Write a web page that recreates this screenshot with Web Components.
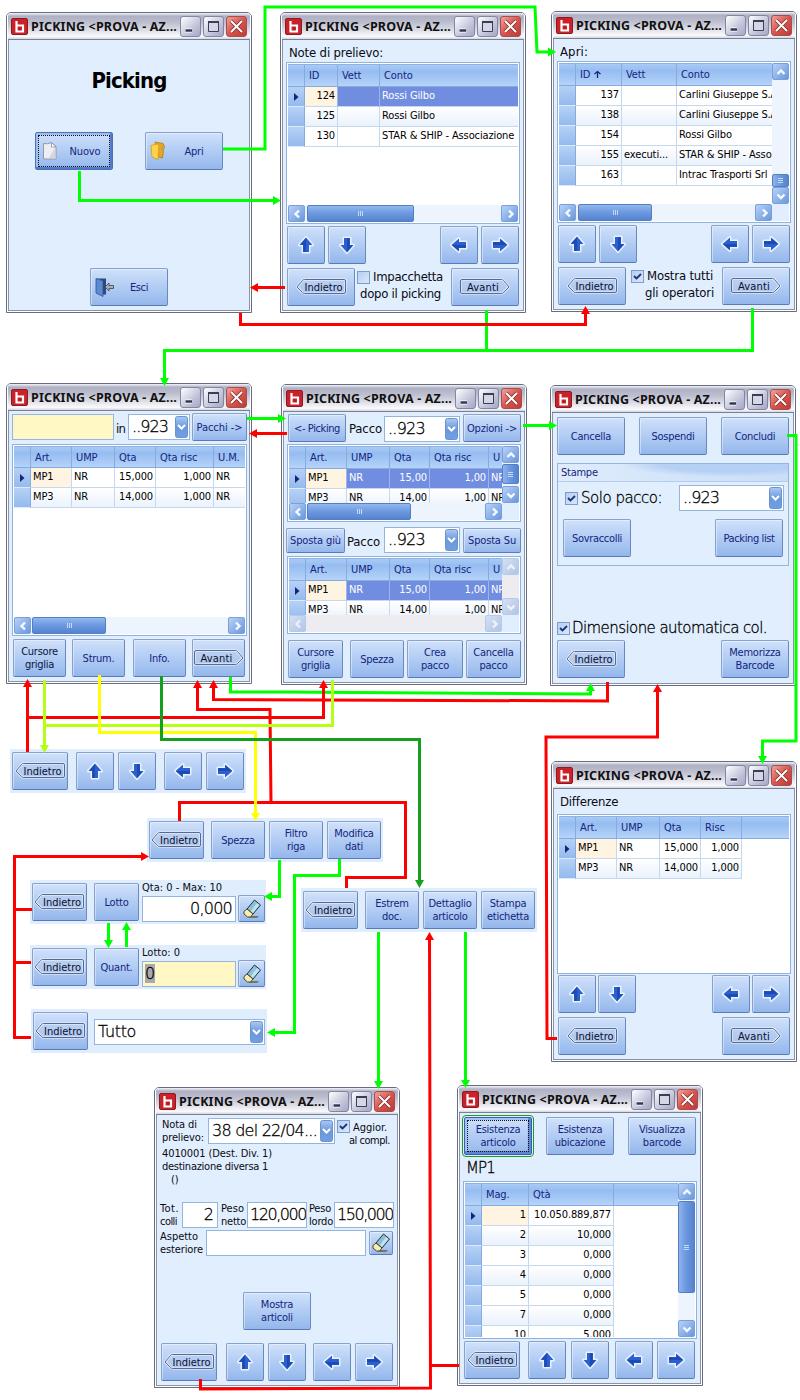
<!DOCTYPE html>
<html lang="it">
<head>
<meta charset="utf-8">
<title>Picking</title>
<style>
html,body{margin:0;padding:0;background:#fff}
body{width:800px;height:1400px;overflow:hidden;font:11px/13px "DejaVu Sans Condensed","DejaVu Sans",sans-serif;font-stretch:condensed;color:#0a0a14}
.r{display:flex;align-items:flex-start}
.c{align-items:center}
.sb{justify-content:space-between}
.m{font-size:13px;line-height:17px}
.l{font-family:"DejaVu Sans Light","DejaVu Sans",sans-serif;font-weight:200;font-stretch:normal;font-size:15px;line-height:18px;color:#000;-webkit-text-stroke:.3px #000}
.ctr{text-align:center}
</style>
</head>
<body>
<flow-canvas>
  <pick-window x="6" y="12">
    <div class="ctr" style="font-size:22px;font-weight:bold;line-height:26px;padding-top:28px;color:#000"><fit-text w="75">Picking</fit-text></div>
    <div class="r sb" style="padding:38px 26px 0"><icon-button kind="new" focus><fit-text w="31">Nuovo</fit-text></icon-button><icon-button kind="open"><fit-text w="19">Apri</fit-text></icon-button></div>
    <div class="r" style="padding:98px 0 0 81px"><icon-button kind="exit"><fit-text w="18">Esci</fit-text></icon-button></div>
  </pick-window>

  <pick-window x="280" y="12">
    <div class="m" style="padding:4px 0 1px 6px"><fit-text w="94">Note di prelievo:</fit-text></div>
    <data-grid style="margin-left:3px" w="234" h="162" cols="ID:33:r|Vett:42|Conto:150" rows="124;;Rossi Gilbo|125;;Rossi Gilbo|130;;STAR &amp; SHIP - Associazione" hl="select" hs="2,107"></data-grid>
    <div class="r sb" style="padding:2px 4px 0 4px"><div class="r" style="gap:3px"><arrow-button dir="up"></arrow-button><arrow-button dir="down"></arrow-button></div><div class="r" style="gap:3px"><arrow-button dir="left"></arrow-button><arrow-button dir="right"></arrow-button></div></div>
    <div class="r" style="padding:4px 4px 0 4px"><nav-button w="68" kind="back"></nav-button>
      <div class="m" style="width:96px;padding-left:2px"><div class="r"><check-box style="margin-top:3px"></check-box><fit-text style="margin-left:3px" w="70">Impacchetta</fit-text></div><div style="padding-left:3px"><fit-text w="81">dopo il picking</fit-text></div></div>
      <nav-button style="margin-left:-2px" w="68" kind="next"></nav-button></div>
  </pick-window>

  <pick-window x="551" y="11">
    <div class="m" style="padding:4px 0 1px 6px"><fit-text w="28">Apri:</fit-text></div>
    <data-grid style="margin-left:3px" w="234" h="162" cols="ID:46:r:sort|Vett:55|Conto:140" rows="137;;Carlini Giuseppe S.A|138;;Carlini Giuseppe S.A|154;;Rossi Gilbo|155;executi...;STAR &amp; SHIP - Asso|163;;Intrac Trasporti Srl" hl="none" hs="2,74" vs="94,13"></data-grid>
    <div class="r sb" style="padding:2px 4px 0 4px"><div class="r" style="gap:3px"><arrow-button dir="up"></arrow-button><arrow-button dir="down"></arrow-button></div><div class="r" style="gap:3px"><arrow-button dir="left"></arrow-button><arrow-button dir="right"></arrow-button></div></div>
    <div class="r" style="padding:4px 4px 0 4px"><nav-button w="68" kind="back"></nav-button>
      <div class="m" style="width:91px;padding-left:5px"><div class="r"><check-box checked style="margin-top:3px"></check-box><fit-text style="margin-left:3px" w="66">Mostra tutti</fit-text></div><div style="padding-left:14px"><fit-text w="69">gli operatori</fit-text></div></div>
      <nav-button w="68" kind="next"></nav-button></div>
  </pick-window>

  <pick-window x="6" y="383">
    <div class="r" style="padding:3px 0 0 3px"><text-field yellow w="102" h="26"></text-field><span class="m" style="padding:6px 2px 0 2px"><fit-text w="9">in</fit-text></span><drop-down w="62" style="margin-left:1px"><fit-text w="36">..923</fit-text></drop-down><pick-button style="margin:-1px 0 0 2px" w="55" h="28"><fit-text w="46">Pacchi -&gt;</fit-text></pick-button></div>
    <data-grid style="margin:3px 0 0 3px" w="235" h="192" hh="22" cols="Art.:41|UMP:43|Qta:41:r|Qta risc:58:r|U.M.:40" rows="MP1;NR;15,000;1,000;NR|MP3;NR;14,000;1,000;NR" hl="focus" hs="1,74"></data-grid>
    <div class="r" style="padding:3px 0 0 4px"><pick-button w="53" h="38" dark>Cursore<br>griglia</pick-button><pick-button style="margin-left:6px" w="53" h="38">Strum.</pick-button><pick-button style="margin-left:8px" w="53" h="38">Info.</pick-button><nav-button style="margin-left:6px" w="53" kind="next"></nav-button></div>
  </pick-window>

  <pick-window x="281" y="384">
    <div class="r" style="padding:2px 0 0 4px"><pick-button w="58" h="28"><fit-text w="46">&lt;- Picking</fit-text></pick-button><span class="m" style="padding:6px 0 0 3px;width:35px"><fit-text w="33">Pacco</fit-text></span><drop-down w="76" style="margin-top:2px"><fit-text w="37">..923</fit-text></drop-down><pick-button style="margin-left:3px" w="58" h="28"><fit-text w="50">Opzioni -&gt;</fit-text></pick-button></div>
    <data-grid style="margin:2px 0 0 3px" w="234" h="78" cols="Art.:41|UMP:43|Qta:40:r|Qta risc:59:r|U:40" rows="MP1;NR;15,00;1,00;NR|MP3;NR;14,00;1,00;NR" hl="select" hs="1,104" vs="1,20"></data-grid>
    <div class="r" style="padding:5px 0 0 2px"><pick-button style="margin-top:1px" w="59" h="25"><fit-text w="51">Sposta giù</fit-text></pick-button><span class="m" style="padding:6px 0 0 2px;width:37px"><fit-text w="33">Pacco</fit-text></span><drop-down w="76"><fit-text w="37">..923</fit-text></drop-down><pick-button style="margin:1px 0 0 3px" w="58" h="25"><fit-text w="48">Sposta Su</fit-text></pick-button></div>
    <data-grid style="margin:3px 0 0 3px" w="234" h="78" cols="Art.:41|UMP:43|Qta:40:r|Qta risc:59:r|U:40" rows="MP1;NR;15,00;1,00;NR|MP3;NR;14,00;1,00;NR" hl="select" hs="0,0" vs="0,0" off></data-grid>
    <div class="r" style="padding:6px 0 0 4px"><pick-button w="55" h="38">Cursore<br>griglia</pick-button><pick-button style="margin-left:7px" w="54" h="38">Spezza</pick-button><pick-button style="margin-left:3px" w="56" h="38">Crea<br>pacco</pick-button><pick-button style="margin-left:3px" w="55" h="38">Cancella<br>pacco</pick-button></div>
  </pick-window>

  <pick-window x="550" y="385">
    <div class="r sb" style="padding:4px 4px 0 4px"><pick-button w="68" h="38">Cancella</pick-button><pick-button w="68" h="38">Sospendi</pick-button><pick-button w="68" h="38">Concludi</pick-button></div>
    <group-box label="Stampe">
      <div class="r c l" style="padding:3px 4px 0 7px"><check-box checked></check-box><fit-text style="margin-left:3px" w="81">Solo pacco:</fit-text><drop-down style="margin-left:auto" w="105"><fit-text w="36">..923</fit-text></drop-down></div>
      <div class="r sb" style="padding:8px 5px 0 5px"><pick-button w="68" h="38"><fit-text w="50">Sovraccolli</fit-text></pick-button><pick-button w="68" h="38"><fit-text w="51">Packing list</fit-text></pick-button></div>
    </group-box>
    <div class="r c l" style="padding:53px 0 0 4px"><check-box checked></check-box><fit-text style="margin-left:2px" w="195">Dimensione automatica col.</fit-text></div>
    <div class="r sb" style="padding:3px 4px 0 4px"><nav-button w="68" kind="back"></nav-button><pick-button w="68" h="38">Memorizza<br>Barcode</pick-button></div>
  </pick-window>

  <pick-window x="551" y="761">
    <div class="m" style="padding:4px 0 4px 6px"><fit-text w="58">Differenze</fit-text></div>
    <data-grid style="margin-left:3px" w="234" h="160" cols="Art.:41|UMP:43|Qta:41:r|Risc:41:r|:60:x" rows="MP1;NR;15,000;1,000|MP3;NR;14,000;1,000" hl="focus"></data-grid>
    <div class="r sb" style="padding:1px 4px 0 4px"><div class="r" style="gap:2px"><arrow-button dir="up"></arrow-button><arrow-button dir="down"></arrow-button></div><div class="r" style="gap:2px"><arrow-button dir="left"></arrow-button><arrow-button dir="right"></arrow-button></div></div>
    <div class="r sb" style="padding:4px 4px 0 4px"><nav-button w="68" kind="back"></nav-button><nav-button w="68" kind="next"></nav-button></div>
  </pick-window>

  <pick-window x="154" y="1087">
    <div class="r" style="padding:3px 0 0 5px;height:29px"><div style="width:46px"><fit-text w="35">Nota di</fit-text><br><fit-text w="42">prelievo:</fit-text></div><drop-down w="127"><fit-text w="105">38 del 22/04...</fit-text></drop-down><div style="padding-left:2px"><div class="r"><check-box checked style="margin-top:2px"></check-box><span style="padding:3px 0 0 3px"><fit-text w="34">Aggior.</fit-text></span></div><div style="padding-left:12px"><fit-text w="41">al compl.</fit-text></div></div></div>
    <div style="padding:0 0 0 5px"><fit-text w="110">4010001 (Dest. Div. 1)</fit-text><br><fit-text w="106">destinazione diversa 1</fit-text><br><span style="padding-left:9px">()</span></div>
    <div class="r" style="padding:16px 0 0 3px"><div style="width:22px"><fit-text w="19">Tot.</fit-text><br><fit-text w="17">colli</fit-text></div><text-field w="36" h="26" right>2</text-field><div style="width:26px;padding-left:3px"><fit-text w="23">Peso</fit-text><br><fit-text w="25">netto</fit-text></div><text-field w="60" h="26"><fit-text w="56">120,000</fit-text></text-field><div style="width:25px;padding-left:2px"><fit-text w="22">Peso</fit-text><br><fit-text w="24">lordo</fit-text></div><text-field w="60" h="26"><fit-text w="56">150,000</fit-text></text-field></div>
    <div class="r" style="padding:2px 0 0 3px"><div style="width:46px"><fit-text w="38">Aspetto</fit-text><br><fit-text w="43">esteriore</fit-text></div><text-field w="160" h="26"></text-field><erase-button w="24" h="24" style="margin:1px 0 0 3px"></erase-button></div>
    <div class="r" style="padding:36px 0 0 86px"><pick-button w="68" h="38">Mostra<br>articoli</pick-button></div>
    <div class="r" style="padding:13px 0 0 4px"><nav-button w="56" kind="back"></nav-button><arrow-button style="margin-left:9px" dir="up"></arrow-button><arrow-button style="margin-left:4px" dir="down"></arrow-button><arrow-button style="margin-left:7px" dir="left"></arrow-button><arrow-button style="margin-left:4px" dir="right"></arrow-button></div>
  </pick-window>

  <pick-window x="457" y="1085">
    <div class="r sb" style="padding:4px 4px 0 4px"><pick-button focus green w="68" h="38">Esistenza<br>articolo</pick-button><pick-button w="68" h="38">Esistenza<br>ubicazione</pick-button><pick-button w="68" h="38">Visualizza<br>barcode</pick-button></div>
    <div class="l" style="padding:4px 0 0 6px"><fit-text w="29">MP1</fit-text></div>
    <data-grid style="margin:4px 0 0 3px" w="234" h="158" cols="Mag.:47:r|Qtà:85:r|:66:x" rows="1;10.050.889,877|2;10,000|3;0,000|4;0,000|5;0,000|7;0,000|10;5.000" hl="focus" vs="1,92"></data-grid>
    <div class="r" style="padding:2px 0 0 4px"><nav-button w="56" kind="back"></nav-button><arrow-button style="margin-left:8px" dir="up"></arrow-button><arrow-button style="margin-left:5px" dir="down"></arrow-button><arrow-button style="margin-left:6px" dir="left"></arrow-button><arrow-button style="margin-left:4px" dir="right"></arrow-button></div>
  </pick-window>

  <button-strip x="10" y="749"><nav-button w="56" kind="back"></nav-button><arrow-button style="margin-left:8px" dir="up"></arrow-button><arrow-button style="margin-left:4px" dir="down"></arrow-button><arrow-button style="margin-left:8px" dir="left"></arrow-button><arrow-button style="margin-left:4px" dir="right"></arrow-button></button-strip>
  <button-strip x="147" y="818"><nav-button w="55" kind="back"></nav-button><pick-button style="margin-left:7px" w="54" h="38">Spezza</pick-button><pick-button style="margin-left:4px" w="54" h="38">Filtro<br>riga</pick-button><pick-button style="margin-left:4px" w="54" h="38">Modifica<br>dati</pick-button></button-strip>
  <button-strip x="30" y="880"><nav-button w="55" kind="back"></nav-button><pick-button style="margin-left:7px" w="45" h="38">Lotto</pick-button><div style="padding-left:3px;margin-top:-2px"><fit-text w="80">Qta: 0 - Max: 10</fit-text><text-field style="margin-top:2px" w="94" h="26" right><fit-text w="42">0,000</fit-text></text-field></div><erase-button style="margin:12px 0 0 2px" w="27" h="27"></erase-button></button-strip>
  <button-strip x="30" y="945"><nav-button w="55" kind="back"></nav-button><pick-button style="margin-left:7px" w="45" h="38">Quant.</pick-button><div style="padding-left:3px;margin-top:-2px"><fit-text w="38">Lotto: 0</fit-text><text-field style="margin-top:2px" yellow w="94" h="26"><span style="background:#a9a9ad">0</span></text-field></div><erase-button style="margin:12px 0 0 2px" w="27" h="27"></erase-button></button-strip>
  <button-strip x="31" y="1009"><nav-button w="55" kind="back"></nav-button><drop-down style="margin:7px 0 0 6px" w="171"><fit-text w="38">Tutto</fit-text></drop-down></button-strip>
  <button-strip x="301" y="888"><nav-button w="55" kind="back"></nav-button><pick-button style="margin-left:7px" w="54" h="38">Estrem<br>doc.</pick-button><pick-button style="margin-left:4px" w="54" h="38">Dettaglio<br>articolo</pick-button><pick-button style="margin-left:4px" w="54" h="38">Stampa<br>etichetta</pick-button></button-strip>
  <flow-lines></flow-lines>
</flow-canvas>
<script>
const make = (name, css, html) => customElements.define(name, class extends HTMLElement {
  connectedCallback() {
    if (this.shadowRoot) return;
    const a = k => this.getAttribute(k);
    const root = this.attachShadow({mode: 'open'});
    const size = (a('w') ? `width:${a('w')}px;` : '') + (a('h') ? `height:${a('h')}px;` : '') + (a('x') ? `left:${a('x')}px;top:${a('y')}px;` : '');
    root.innerHTML = `<style>*{box-sizing:border-box}:host{display:block;box-sizing:border-box;flex:none;${size}}${css}</style>` + html(a);
  }
});
const FACE = 'background:linear-gradient(180deg,#d0e1fa 0,#bad2f6 35%,#a3c2f0 75%,#94b6ec 100%);border:1px solid #86a2cd;border-right-color:#6a89be;border-bottom-color:#5a7ab6;border-radius:2px;box-shadow:inset 1px 1px 0 rgba(255,255,255,.4);font:11px/13px "DejaVu Sans Condensed","DejaVu Sans",sans-serif;font-stretch:condensed;letter-spacing:-.25px;';
const BIG = 'font-family:"DejaVu Sans Light","DejaVu Sans",sans-serif;font-weight:200;font-stretch:normal;font-size:16px;line-height:24px;white-space:nowrap;color:#000;-webkit-text-stroke:.3px #000;';

make('flow-canvas', ':host{position:relative;width:800px;height:1400px;overflow:hidden}', () => '<slot></slot>');

make('pick-window', `
:host{position:absolute;width:246px;height:301px;background:#e1eefd;border:1px solid #676d80;border-radius:5px 5px 0 0}
.f{height:299px;border:1px solid #fff;border-top:0;border-radius:4px 4px 0 0;overflow:hidden;display:flex;flex-direction:column}
.t{height:27px;flex:none;display:flex;align-items:center;padding:1px 3px 0 3px;background:linear-gradient(180deg,#f4f4f8 0,#aeb0c4 12%,#bcbdcd 35%,#dcdce6 65%,#fafafd 90%,#d5d6de 100%);border-bottom:1px solid #7a8093}
.n{margin-left:3px;font:bold 12.500px/18px "Noto Sans","Open Sans",sans-serif;color:#111;flex:1}
.b{width:21px;height:21px;border:1px solid #8286a5;border-radius:3px;background:linear-gradient(135deg,#fff,#c3c5da 60%,#a5a8c6);margin-left:2px;flex:none;display:block}
.x{background:linear-gradient(135deg,#f2a39b,#d9544c 50%,#bf3a36);border-color:#a05055}
.c{flex:1;min-height:0;border:1px solid #8b93a5;border-top:0}
svg{display:block}`,
() => `<div class="f"><div class="t"><svg width="17" height="17" viewBox="0 0 17 17"><rect x=".5" y=".5" width="16" height="16" rx="1.5" fill="#cb2128" stroke="#8c1a20"/><path d="M5.5 3v10.500h6.500V7.500H6" fill="none" stroke="#fff" stroke-width="2.200"/><path d="M8 10.500h2.500" stroke="#a51a20" stroke-width="1.600"/></svg><span class="n"><fit-text w="146">PICKING &lt;PROVA - AZ...</fit-text></span>
<span class="b"><svg width="19" height="19"><path d="M4 13.500h7" stroke="#fff" stroke-width="4"/><path d="M4.500 13.500h6.500" stroke="#33364f" stroke-width="2.600"/></svg></span><span class="b"><svg width="19" height="19"><path d="M4.500 5v9.500h10V5z" fill="#d5d6e6" stroke="#3c3e55"/><path d="M4 5h11" stroke="#3c3e55" stroke-width="2"/></svg></span><span class="b x"><svg width="19" height="19"><path d="M4 4l11 11M15 4L4 15" stroke="#7c2b2b" stroke-width="3.400"/><path d="M4 4l11 11M15 4L4 15" stroke="#fff" stroke-width="2"/></svg></span></div><div class="c"><slot></slot></div></div>`);

make('button-strip', ':host{position:absolute;width:236px;height:44px;background:#dfedfc;padding:3px 0 0 2px;display:flex;align-items:flex-start}', () => '<slot></slot>');

make('pick-button', `
:host{${FACE}display:flex;align-items:center;justify-content:center;text-align:center;color:#14247e;position:relative}
:host([dark]){color:#0c1440}
:host([focus]){border-color:#355fae;box-shadow:inset -3px -3px 1px #5f86d0,inset 2px 2px 0 #a5c3f2}
:host([focus])::after{content:"";position:absolute;inset:2px;border:1px dotted #111}
:host([green]){outline:1px solid #1d9a2a;outline-offset:1px}`, () => '<span><slot></slot></span>');

const ICONS = {
  new: '<path d="M1.500 2.500q4 1 8-1l4.500 4V18H1.500z" fill="#eceef2" stroke="#9398a8"/><path d="M9.500 1.500V6H14z" fill="#fff" stroke="#8a90a0" stroke-width=".8"/><path d="M14 6v12H6z" fill="#c9ccd4" opacity=".7"/>',
  open: '<path d="M5 1l8 1.500 1.500 3-1 3.500-1 8-4-1z" fill="#e9a51d" stroke="#b87a10" stroke-width=".8"/><path d="M11 4l3 2-1.500 8z" fill="#caa050"/><path d="M1 4.500l6-1.500 2 1.500L8 18.500l-6-2.500z" fill="#ffd44a" stroke="#d29a17" stroke-width=".8"/>',
  exit: '<path d="M2 1.500h9v16H8V4z" fill="#2b4a80"/><path d="M1 1.500l7 2.500v15.500L1 16z" fill="#5c8bd2" stroke="#2d5190" stroke-width=".8"/><path d="M10 10l4-4v2.500h4.500v3H14V14z" fill="#a8adb5" stroke="#4b4f58" stroke-width=".9"/>'
};
make('icon-button', `
:host{${FACE}width:78px;height:38px;display:flex;align-items:center;color:#14247e;position:relative;padding-left:4px}
:host([focus]){border-color:#4b72b8;box-shadow:inset -2px -2px 1px #4f79c8,inset 2px 2px 0 #9fbff0}
:host([focus])::after{content:"";position:absolute;inset:2px;border:1px dotted #111}
:host([kind=new]){padding-left:6px}:host([kind=new]) span{padding-left:0;padding-right:3px}
span{flex:1;text-align:center;padding-left:0;padding-right:3px}`,
a => `<svg width="19" height="20">${ICONS[a('kind')]}</svg><span><slot></slot></span>`);

const ROT = {up: 0, right: 90, down: 180, left: 270};
make('arrow-button', `:host{${FACE}width:38px;height:38px;display:flex;align-items:center;justify-content:center}`,
a => `<svg width="20" height="20" viewBox="0 0 20 20"><g transform="rotate(${ROT[a('dir')]} 10 10)"><path d="M10 2.500l6.500 7.500h-3.500v7h-6v-7H3.500z" fill="#2a60d0" stroke="#e9f2ff" stroke-width="3" stroke-linejoin="round" paint-order="stroke"/><path d="M10 3v14h-2.700v-7.500H4z" fill="#123a9c" opacity=".55"/></g></svg>`);

make('nav-button', `:host{${FACE}height:38px;display:flex;align-items:center;justify-content:center;color:#0b0f2c}
.g{display:grid}svg,span{grid-area:1/1}span{align-self:center;line-height:13px}.back{padding-left:9px}.next{padding-left:7px}`,
a => { const back = a('kind') === 'back';
  const d = back ? 'M1 9L6.500 2.500Q7 1.500 8.500 1.500H48q1.500 0 1.500 1.500v11q0 1.500-1.500 1.500H8.500q-1.500 0-2-1z' : 'M49 9L43.500 2.500Q43 1.500 41.500 1.500H2Q.5 1.500.5 3v11q0 1.500 1.500 1.500h39.500q1.500 0 2-1z';
  return `<div class="g"><svg width="${back ? 51 : 50}" height="18"><path d="${d}" fill="#b7cbee" stroke="#fff" stroke-width="2.600" opacity=".55"/><path d="${d}" fill="none" stroke="#586a90"/></svg><span class="${a('kind')}">${back ? '<fit-text w="38">Indietro</fit-text>' : '<fit-text w="32">Avanti</fit-text>'}</span></div>`; });

make('erase-button', `:host{${FACE}display:flex;align-items:center;justify-content:center}`,
() => `<svg width="20" height="20" viewBox="0 0 20 20"><path d="M7 19h8l2-2H9z" fill="#7a7658"/><path d="M12.500 1l6 5-7.500 9-6-5z" fill="#8cc0d6" stroke="#1f3340"/><path d="M15 4l2.500 2-6.500 8-2-2z" fill="#c3e2ec"/><path d="M5 10l6 5-2.500 3H5.500L2 15v-2.500z" fill="#f7edb0" stroke="#4a452c"/></svg>`);

make('check-box', ':host{width:13px;height:13px;border:1px solid #7d9cc9;background:linear-gradient(135deg,#b7cff2,#d9e7fb)}svg{display:block}',
a => a('checked') === null ? '' : '<svg width="11" height="11"><path d="M2 5l2.500 2.500L9 3" fill="none" stroke="#17337c" stroke-width="1.800"/></svg>');

make('text-field', `:host{background:#fff;border:1px solid #93b5de;padding:0 0 0 2px;${BIG}overflow:hidden}
:host([yellow]){background:#fff8c4}:host([right]){text-align:right;padding-right:3px}`, () => '<slot></slot>');

make('drop-down', `:host{height:26px;background:#fff;border:1px solid #93b5de;display:flex;${BIG}padding:0 1px 0 3px;overflow:hidden}
span{flex:1;min-width:0}svg{margin-top:1px;flex:none}`,
() => `<span><slot></slot></span><svg width="13" height="22"><defs><linearGradient id="g" x2="0" y2="1"><stop stop-color="#a9caf5"/><stop offset=".5" stop-color="#6c98dc"/><stop offset="1" stop-color="#6fa0e4"/></linearGradient></defs><rect x=".5" y=".5" width="12" height="21" rx="2" fill="url(#g)" stroke="#6e93cb"/><path d="M3 9l3.500 3.500L10 9" fill="none" stroke="#fff" stroke-width="2"/></svg>`);

make('group-box', `:host{margin:8px 4px 0 4px;height:103px;border:1px solid #93b5de}
.h{height:18px;border-bottom:1px solid #b5cdec;padding:2px 0 0 3px;line-height:14px;letter-spacing:-.25px;color:#14247e;background:radial-gradient(ellipse 110px 13px at 75% 0,#b4d0f4 0 60%,transparent 100%),linear-gradient(90deg,#dfecfc,#c9def8)}`,
a => `<div class="h">${a('label')}</div><slot></slot>`);

const CHEV = {left: 'M10 4.500L6.500 8 10 11.500', right: 'M7 4.500L10.500 8 7 11.500', up: 'M4.500 10L8 6.500 11.500 10', down: 'M4.500 6.500L8 10 11.500 6.500'};
make('scroll-bar', `
:host{display:flex;background:#eef4fd}
:host([axis=v]){flex-direction:column;width:17px;height:100%}
:host([axis=h]){height:17px;width:100%}
.e{width:17px;height:17px;flex:none;border:1px solid #7ba0d8;border-radius:2px;background:linear-gradient(135deg,#b7d2f7,#6a97dc)}
svg{display:block}
.k{flex:none;border:1px solid #557fc4;border-radius:2px;display:flex;align-items:center;justify-content:center}
:host([axis=h]) .k{height:17px;background:linear-gradient(180deg,#93b8ee,#6e9be0 45%,#5583cf)}
:host([axis=v]) .k{width:17px;background:linear-gradient(90deg,#8fb4ec,#6c98df 45%,#5583cf)}
.g{flex:1}
:host([off]){background:#ececf1}:host([off]) .e{opacity:.45}:host([off]) .k{display:none}`,
a => { const [gap, len] = a('at').split(',').map(Number), h = a('axis') === 'h';
  const btn = d => `<div class="e"><svg width="15" height="15"><path d="${CHEV[d]}" fill="none" stroke="#f4f9ff" stroke-width="2.400"/></svg></div>`;
  return btn(h ? 'left' : 'up') + `<div class="k" style="${h ? 'margin-left' : 'margin-top'}:${gap}px;${h ? 'width' : 'height'}:${len}px"><svg width="9" height="9"><path d="${h ? 'M2.500 2v5M4.500 2v5M6.500 2v5' : 'M2 2.500h5M2 4.500h5M2 6.500h5'}" stroke="#c4dbfa"/></svg></div><div class="g"></div>` + btn(h ? 'right' : 'down'); });

make('data-grid', `
:host{border:1px solid #8fb3de;padding:1px;background:#fff;letter-spacing:-.12px}
.o{display:grid;grid-template:minmax(0,1fr) auto/minmax(0,1fr) auto;height:100%}
.v{overflow:hidden}
.row{display:flex;height:20px}
.hd{background:linear-gradient(180deg,#a9caf5 0,#96bdf1 30%,#a8caf6 70%,#b9d5fa 100%);color:#14247e;border-top:1px solid #8fb3de}
.hd .cell{border-color:#86abdf;line-height:21px;padding-left:4px;text-align:left;border-bottom:1px solid #86abdf}
.ind{width:17px;flex:none;background:linear-gradient(180deg,#b6d1f6,#94baed);border-right:1px solid #86abdf;border-bottom:1px solid #dceafb;display:flex;align-items:center;justify-content:center}
.hd .ind{background:none;border-bottom-color:#86abdf}
.cell{flex:none;border-right:1px solid #c5d8ee;border-bottom:1px solid #c5d8ee;padding:0 2px;line-height:18px;white-space:nowrap;overflow:hidden;color:#000}
.hd .cell{color:#14247e}
.r{text-align:right}.alt .cell{background:linear-gradient(180deg,#fff,#eaf2fc)}
.x{border:0!important;background:none!important}.hd .x{border-bottom:1px solid #86abdf!important}
.sel .cell{background:#708de0;color:#fff;border-right-color:#9fb4ee}
.foc .f{background:#fff3e2;color:#000}
.v.e{background:#e1eefd}`,
a => {
  const cols = a('cols').split('|').map(c => c.split(':'));
  const rows = a('rows').split('|').map(r => r.split(';'));
  const hl = a('hl'), esc = s => s.replace(/&/g, '&amp;');
  const head = `<div class="row hd" style="height:${a('hh') || 23}px"><div class="ind"></div>${cols.map(c => `<div class="cell ${c[2] === 'x' ? 'x' : ''}" style="width:${c[1]}px">${c[0]}${c[3] ? ' <svg width="9" height="8"><path d="M4.500 8V1.500M1.500 4l3-2.500 3 2.500" fill="none" stroke="#14247e" stroke-width="1.300"/></svg>' : ''}</div>`).join('')}</div>`;
  const body = rows.map((r, i) => `<div class="row ${i % 2 ? 'alt' : ''} ${i === 0 && hl !== 'none' ? 'foc' : ''} ${i === 0 && hl === 'select' ? 'sel' : ''}"><div class="ind">${i === 0 && hl !== 'none' ? '<svg width="5" height="8"><path d="M0 0l4.500 4L0 8z" fill="#14247e"/></svg>' : ''}</div>${r.map((t, j) => `<div class="cell ${j === 0 ? 'f' : ''} ${cols[j][2] === 'r' ? 'r' : ''}" style="width:${cols[j][1]}px">${esc(t)}</div>`).join('')}</div>`).join('');
  const off = a('off') === null ? '' : 'off';
  return `<div class="o"><div class="v">${head}${body}</div>${a('vs') ? `<scroll-bar axis="v" at="${a('vs')}" ${off}></scroll-bar>` : '<div></div>'}${a('hs') ? `<scroll-bar axis="h" at="${a('hs')}" ${off}></scroll-bar>${a('vs') ? '<div class="v e"></div>' : ''}` : ''}</div>`; });

const LINES = [
  ['#00ff00', '223,149 265,149 265,7 535,7 537,52 551,52', 1],
  ['#00ff00', '79.500,171 79.500,200.500 276,200.500', 1],
  ['#00ff00', '486.500,310 486.500,350'],
  ['#00ff00', '752.500,308 752.500,350.500 164.500,350.500 164.500,381', 1],
  ['#00ff00', '247,418.500 281,418.500', 1],
  ['#00ff00', '523,425.500 552,425.500', 1],
  ['#00ff00', '787,435.500 796,435.500 796,741 762.500,741 762.500,759', 1],
  ['#00ff00', '230.500,677 230.500,692 280,692 590.500,694 590.500,688', 1],
  ['#ff0000', '285,287.500 255,287.500', 1],
  ['#ff0000', '240.500,313 240.500,324.500 585.500,324.500 585.500,311', 1],
  ['#ff0000', '287,433.500 254,433.500', 1],
  ['#ff0000', '607.500,682 607.500,701 213.500,699.500 213.500,685', 1],
  ['#ff0000', '27.500,752 27.500,684', 1],
  ['#ff0000', '27.500,717.500 323.500,717.500 323.500,685', 1],
  ['#ff0000', '179.500,821 179.500,802.500 405.500,802.500 405.500,877.500 346.500,877.500 346.500,888'],
  ['#ff0000', '271,802 270,709.500 197.500,709.500 197.500,685', 1],
  ['#ff0000', '31,1037.500 14.500,1037.500 14.500,856.500 144,856.500', 1],
  ['#ff0000', '14.500,909.500 32,909.500'],
  ['#ff0000', '14.500,962.500 31,962.500'],
  ['#ff0000', '557,1038.500 547,1038.500 546,737 657.500,737 657.500,689', 1],
  ['#ff0000', '200.500,1379 200.500,1389 430.500,1388 429.500,937', 1],
  ['#ff0000', '430,1365.500 459,1365.500'],
  ['#b4ff14', '44.500,680 44.500,748', 1],
  ['#b4ff14', '44.500,725.500 332.500,725.500 332.500,680'],
  ['#ffff00', '99.500,675 99.500,732.500 255.500,732.500 255.500,816', 1],
  ['#14a01e', '161.500,676 161.500,739.500 419.500,739.500 419.500,883', 1],
  ['#00ff00', '279.500,860 279.500,896.500 269,896.500', 1],
  ['#00ff00', '339.500,859 339.500,875.500 294.500,875.500 294.500,1032.500 272,1032.500', 1],
  ['#00ff00', '378.500,932 378.500,1084', 1],
  ['#00ff00', '465.500,932 465.500,1083', 1],
  ['#00ff00', '108.500,923 108.500,943', 1],
  ['#00ff00', '126.500,947 126.500,927', 1]
];
make('flow-lines', ':host{position:absolute;left:0;top:0;width:800px;height:1400px;pointer-events:none}svg{display:block}',
() => '<svg width="800" height="1400">' + LINES.map(([c, p, tip]) => {
  let s = `<polyline points="${p}" fill="none" stroke="${c}" stroke-width="3"/>`;
  if (tip) {
    const q = p.split(' ').map(v => v.split(',').map(Number)), [x, y] = q[q.length - 1], [u, v] = q[q.length - 2];
    const ang = Math.abs(x - u) > Math.abs(y - v) ? (x > u ? 0 : 180) : (y > v ? 90 : 270);
    s += `<path d="M-3-4.500L5 0-3 4.500z" fill="${c}" transform="translate(${x} ${y}) rotate(${ang})"/>`;
  }
  return s; }).join('') + '</svg>');

/* Registered last, so that inherited fonts are settled when the width is measured. */
customElements.define('fit-text', class extends HTMLElement {
  connectedCallback() {
    if (this.shadowRoot) return;
    this.attachShadow({mode: 'open'}).innerHTML = '<style>:host{display:inline-block;white-space:nowrap;flex:none}</style><slot></slot>';
    this.style.letterSpacing = '0px';
    const n = this.textContent.length, w = this.getBoundingClientRect().width, t = Number(this.getAttribute('w'));
    this.style.letterSpacing = ((t - w) / n).toFixed(3) + 'px';
  }
});
</script>
</body>
</html>
